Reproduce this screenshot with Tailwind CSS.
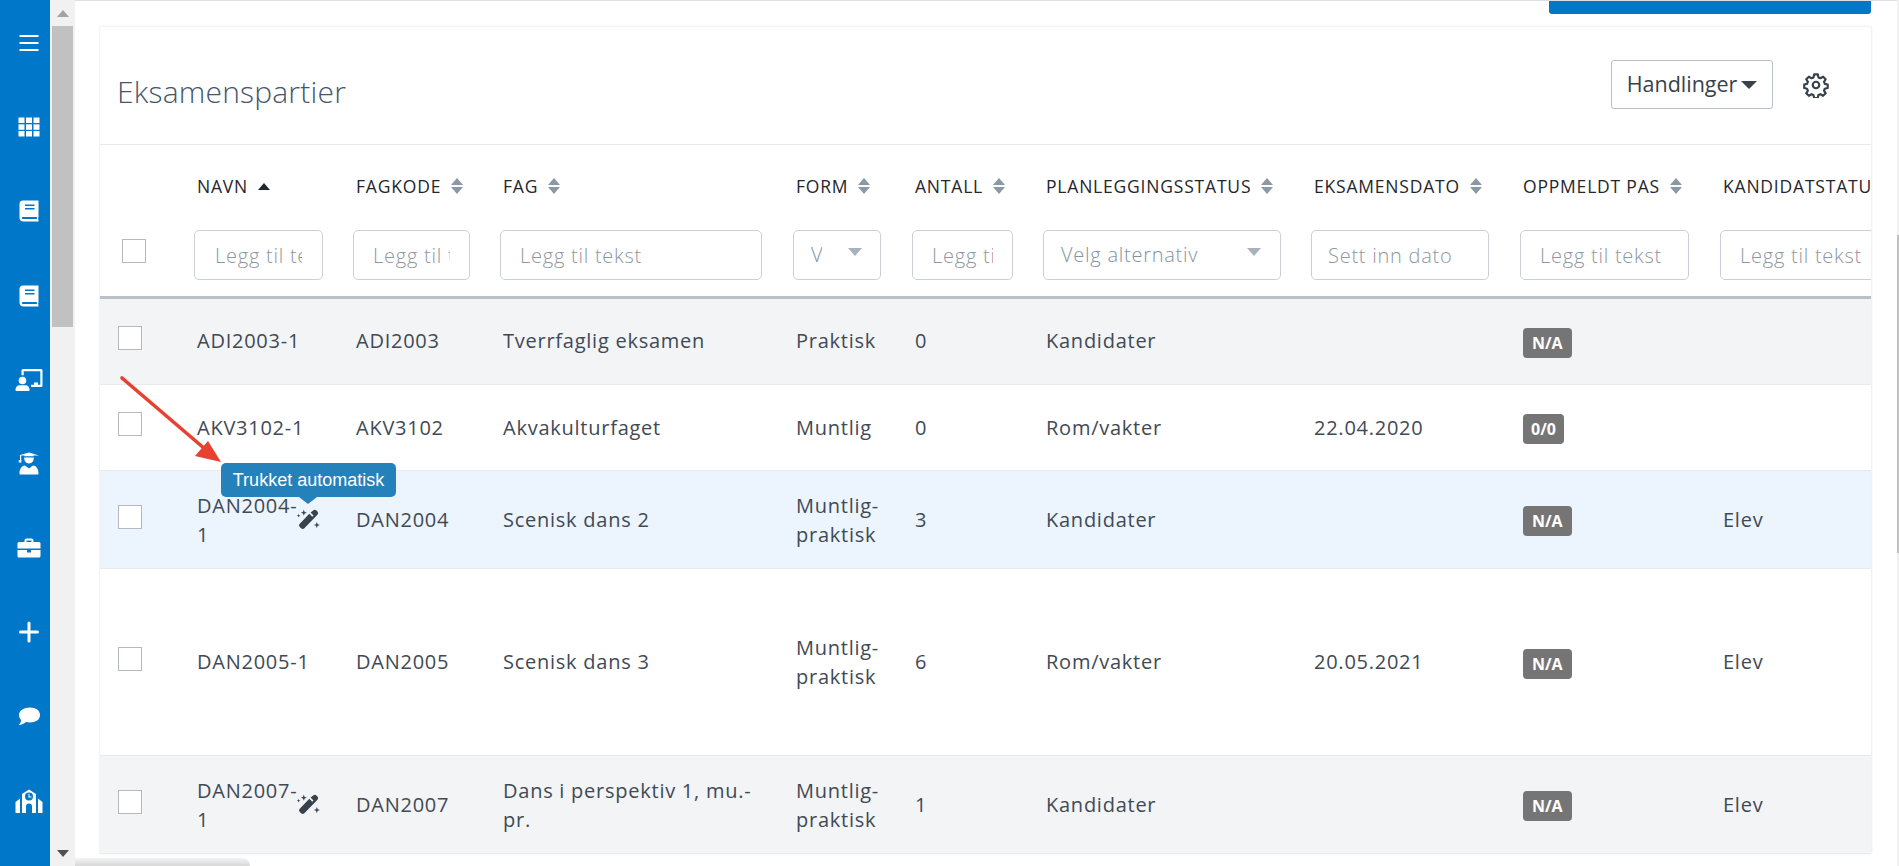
<!DOCTYPE html>
<html lang="en">
<head>
    <meta charset="UTF-8">
    <title>Eksamenspartier</title>
    <script src="https://cdn.jsdelivr.net/npm/@tailwindcss/browser@4"></script>
</head>
<body class="h-screen overflow-hidden bg-white font-['Open_Sans',sans-serif] text-[#3f4a55]">
<div class="relative flex h-[866px] w-[1899px] overflow-hidden">

    <!-- Sidebar -->
    <nav class="flex w-[50px] shrink-0 flex-col bg-[#0077c8] pt-px pl-2 text-white">
        <div class="flex h-[84.2px] items-center justify-center">
            <svg class="h-6 w-7" viewBox="0 0 28 24" fill="currentColor"><rect x="4.5" y="4" width="19" height="2"/><rect x="4.5" y="11" width="19" height="2"/><rect x="4.5" y="18" width="19" height="2"/></svg>
        </div>
        <div class="flex h-[84.2px] items-center justify-center">
            <svg class="h-6 w-7" viewBox="0 0 28 24" fill="currentColor"><rect x="3.5" y="2.5" width="6" height="5.5"/><rect x="11" y="2.5" width="6" height="5.5"/><rect x="18.5" y="2.5" width="6" height="5.5"/><rect x="3.5" y="9.3" width="6" height="5.5"/><rect x="11" y="9.3" width="6" height="5.5"/><rect x="18.5" y="9.3" width="6" height="5.5"/><rect x="3.5" y="16" width="6" height="5.5"/><rect x="11" y="16" width="6" height="5.5"/><rect x="18.5" y="16" width="6" height="5.5"/></svg>
        </div>
        <div class="flex h-[84.2px] items-center justify-center">
            <svg class="h-6 w-7" viewBox="0 0 28 24"><path fill="#fff" d="M8 1.5h15.5v16.8c-.5.6-.5 1.9 0 2.7v1.5H8.5A4 4 0 0 1 4.5 18.5V5A3.5 3.5 0 0 1 8 1.5z"/><path fill="#0077c8" d="M10 5.5h9.5V7H10zM10 9h9.5v1.5H10zM7.5 18H22c-.2.6-.2 1.2 0 2H7.5c-.8-.5-.8-1.5 0-2z"/></svg>
        </div>
        <div class="flex h-[84.2px] items-center justify-center">
            <svg class="h-6 w-7" viewBox="0 0 28 24"><path fill="#fff" d="M8 1.5h15.5v16.8c-.5.6-.5 1.9 0 2.7v1.5H8.5A4 4 0 0 1 4.5 18.5V5A3.5 3.5 0 0 1 8 1.5z"/><path fill="#0077c8" d="M10 5.5h9.5V7H10zM10 9h9.5v1.5H10zM7.5 18H22c-.2.6-.2 1.2 0 2H7.5c-.8-.5-.8-1.5 0-2z"/></svg>
        </div>
        <div class="flex h-[84.2px] items-center justify-center">
            <svg class="h-6 w-7" viewBox="0 0 28 24" fill="#fff"><circle cx="7.5" cy="12.5" r="3.8"/><path d="M.5 22c0-3.5 2.5-4.8 4-4.8h6c1.5 0 4 1.3 4 4.8 0 .6-.4 1-1 1h-12c-.6 0-1-.4-1-1z"/><path d="M6.5 2.5A1.5 1.5 0 0 1 8 1h18a1.5 1.5 0 0 1 1.5 1.5v15A1.5 1.5 0 0 1 26 19H16v-2.2h3v-2.3h4v2.3h2.3V3.2H8.700v4H6.5z"/></svg>
        </div>
        <div class="flex h-[84.2px] items-center justify-center">
            <svg class="h-6 w-7" viewBox="0 0 28 24" fill="#fff"><path d="M14 .5 24 3.5h-5.5v.7h-9v-.7H6.2V8H5V3.2H4z"/><path d="M9.2 5.5h9.6c.3 3-1.800 6-4.800 6s-5.100-3-4.800-6z"/><rect x="3.8" y="8" width="2.6" height="2.5"/><path d="M4.5 21.5c0-5 2.500-8 5.500-8l4 3 4-3c3 0 5.500 3 5.500 8 0 .6-.4 1-1 1h-17c-.6 0-1-.4-1-1z"/></svg>
        </div>
        <div class="flex h-[84.2px] items-center justify-center">
            <svg class="h-6 w-7" viewBox="0 0 28 24" fill="#fff"><path d="M9.5 6V4.5a2 2 0 0 1 2-2h5a2 2 0 0 1 2 2V6H24a1.5 1.5 0 0 1 1.5 1.5v5h-23v-5A1.5 1.5 0 0 1 4 6zM11.5 4.5V6h5V4.500z"/><path d="M2.5 14H12v2.5h4V14h9.5v6a1.5 1.5 0 0 1-1.5 1.5H4A1.5 1.5 0 0 1 2.5 20z"/></svg>
        </div>
        <div class="flex h-[84.2px] items-center justify-center">
            <svg class="h-6 w-7" viewBox="0 0 28 24" fill="#fff"><path d="M12.5 3a1.5 1.5 0 0 1 3 0v7.5h7a1.5 1.5 0 0 1 0 3h-7V21a1.5 1.5 0 0 1-3 0v-7.5h-7a1.5 1.5 0 0 1 0-3h7z"/></svg>
        </div>
        <div class="flex h-[84.2px] items-center justify-center">
            <svg class="h-6 w-7" viewBox="0 0 28 24" fill="#fff"><path d="M15 2.5c5.800 0 10 2.900 10 7.500s-4.200 7.500-10 7.500c-1.400 0-2.700-.2-3.900-.5-1.700 1.500-4.100 3-7.600 3 1.600-1.300 2.500-3 2.700-5-1.300-1.300-2.200-3-2.200-5 0-4.600 5.200-7.500 11-7.500z"/></svg>
        </div>
        <div class="flex h-[84.2px] items-center justify-center">
            <svg class="h-6 w-7" viewBox="0 0 28 24" fill="#fff"><path fill-rule="evenodd" d="M14 .5 21 5v19h-4v-6.500a3 3 0 0 0-6 0V24H7V5zM14 3.500a4 4 0 1 0 0 8 4 4 0 0 0 0-8z"/><path d="M13.500 4.700v3.800h3v-1h-2V4.700z"/><path d="M.5 13 5 9.500V24H.5zM27.500 13 23 9.500V24h4.500z"/></svg>
        </div>
    </nav>

    <!-- Inner scrollbar -->
    <div class="relative w-[25px] shrink-0 bg-[#f1f1f1]">
        <div class="absolute top-[10px] left-[7px] h-0 w-0 border-x-[6px] border-b-[7px] border-x-transparent border-b-[#a3a3a3]"></div>
        <div class="absolute top-[26px] left-[2px] h-[301px] w-[21px] bg-[#c1c1c1]"></div>
        <div class="absolute top-[850px] left-[7px] h-0 w-0 border-x-[6px] border-t-[7px] border-x-transparent border-t-[#505050]"></div>
    </div>

    <!-- Main -->
    <main class="relative min-w-0 flex-1 border-t border-[#dcdfe3] pr-[26px] pl-[24px]">
        <div class="ml-auto h-[13px] w-[322px] rounded-b-[3px] bg-[#0077c8]"></div>
        <section class="mt-3 overflow-hidden rounded-t-[3px] border-t border-l border-[#f3f4f5] bg-white shadow-[1px_0_2px_rgba(0,0,0,0.08)]">
            <header class="flex h-[118px] items-center border-b border-[#e7e9eb] pr-[42px] pb-[2px] pl-[17px]">
                <h1 class="flex-1 pt-[14px] text-[30px] font-light tracking-[0.2px] text-[#46566a]">Eksamenspartier</h1>
                <button class="flex h-[49px] w-[162px] items-center justify-center gap-[4px] rounded-[3px] border border-[#b9c0c6] text-[21.5px] font-medium text-[#37424d]">
                    Handlinger
                    <span class="mt-px h-0 w-0 border-x-[8px] border-t-[8px] border-x-transparent border-t-[#37424d]"></span>
                </button>
                <svg class="ml-[30px] h-[26px] w-[26px]" viewBox="0 0 24 24" fill="none" stroke="#37424d" stroke-width="2" stroke-linejoin="round"><circle cx="12" cy="12" r="3"/><path d="M10.3 2.2h3.4l.6 2.800 1.800.8 2.500-1.500 2.300 2.400-1.500 2.400.8 1.900 2.600.6v3.100l-2.700.7-.7 1.800 1.500 2.500-2.400 2.300-2.400-1.500-1.900.8-.6 2.700h-3.300l-.7-2.700-1.800-.8-2.400 1.500-2.400-2.300 1.500-2.500-.8-1.800-2.600-.7v-3.100l2.600-.6.8-1.900-1.500-2.400 2.400-2.400 2.400 1.500 1.900-.8z"/></svg>
            </header>

            <table class="w-[1820px] table-fixed text-[20px] tracking-[0.75px]">
                <colgroup>
                    <col class="w-[94px]"><col class="w-[159px]"><col class="w-[147px]"><col class="w-[293px]"><col class="w-[119px]"><col class="w-[131px]"><col class="w-[268px]"><col class="w-[209px]"><col class="w-[200px]"><col class="w-[200px]">
                </colgroup>
                <thead class="border-b-[3px] border-[#b9c0c8] text-left">
                    <tr class="h-[85px] text-[17.5px] font-medium tracking-[0.8px] text-[#1f262d] uppercase [&_th]:pb-[3px] [&_th]:pl-[3px] [&_th]:align-middle [&_th]:font-medium">
                        <th></th>
                        <th>
                            <div class="flex items-center gap-[10px]">Navn <span class="h-0 w-0 border-x-[6px] border-b-[7px] border-x-transparent border-b-[#1f262d]"></span></div>
                        </th>
                        <th>
                            <div class="flex items-center gap-[10px]">Fagkode <span class="flex flex-col gap-[2px]"><span class="h-0 w-0 border-x-[6px] border-b-[7px] border-x-transparent border-b-[#8b99a6]"></span><span class="h-0 w-0 border-x-[6px] border-t-[7px] border-x-transparent border-t-[#8b99a6]"></span></span></div>
                        </th>
                        <th>
                            <div class="flex items-center gap-[10px]">Fag <span class="flex flex-col gap-[2px]"><span class="h-0 w-0 border-x-[6px] border-b-[7px] border-x-transparent border-b-[#8b99a6]"></span><span class="h-0 w-0 border-x-[6px] border-t-[7px] border-x-transparent border-t-[#8b99a6]"></span></span></div>
                        </th>
                        <th>
                            <div class="flex items-center gap-[10px]">Form <span class="flex flex-col gap-[2px]"><span class="h-0 w-0 border-x-[6px] border-b-[7px] border-x-transparent border-b-[#8b99a6]"></span><span class="h-0 w-0 border-x-[6px] border-t-[7px] border-x-transparent border-t-[#8b99a6]"></span></span></div>
                        </th>
                        <th>
                            <div class="flex items-center gap-[10px]">Antall <span class="flex flex-col gap-[2px]"><span class="h-0 w-0 border-x-[6px] border-b-[7px] border-x-transparent border-b-[#8b99a6]"></span><span class="h-0 w-0 border-x-[6px] border-t-[7px] border-x-transparent border-t-[#8b99a6]"></span></span></div>
                        </th>
                        <th>
                            <div class="flex items-center gap-[10px]">Planleggingsstatus <span class="flex flex-col gap-[2px]"><span class="h-0 w-0 border-x-[6px] border-b-[7px] border-x-transparent border-b-[#8b99a6]"></span><span class="h-0 w-0 border-x-[6px] border-t-[7px] border-x-transparent border-t-[#8b99a6]"></span></span></div>
                        </th>
                        <th>
                            <div class="flex items-center gap-[10px]">Eksamensdato <span class="flex flex-col gap-[2px]"><span class="h-0 w-0 border-x-[6px] border-b-[7px] border-x-transparent border-b-[#8b99a6]"></span><span class="h-0 w-0 border-x-[6px] border-t-[7px] border-x-transparent border-t-[#8b99a6]"></span></span></div>
                        </th>
                        <th>
                            <div class="flex items-center gap-[10px]">Oppmeldt pas <span class="flex flex-col gap-[2px]"><span class="h-0 w-0 border-x-[6px] border-b-[7px] border-x-transparent border-b-[#8b99a6]"></span><span class="h-0 w-0 border-x-[6px] border-t-[7px] border-x-transparent border-t-[#8b99a6]"></span></span></div>
                        </th>
                        <th class="whitespace-nowrap">Kandidatstatus</th>
                    </tr>
                    <tr class="h-[66px] font-light [&_td]:pb-[16px] [&_td]:align-middle">
                        <td><div class="mb-[8px] ml-[22px] h-[24px] w-[24px] border border-[#b5b9bd] bg-white"></div></td>
                        <td><input class="h-[50px] w-[129px] rounded-[5px] border border-[#ccd0d4] px-[20px] outline-none placeholder:text-[#8f979e]" placeholder="Legg til tekst"></td>
                        <td><input class="h-[50px] w-[117px] rounded-[5px] border border-[#ccd0d4] px-[19px] outline-none placeholder:text-[#8f979e]" placeholder="Legg til tekst"></td>
                        <td><input class="h-[50px] w-[262px] rounded-[5px] border border-[#ccd0d4] px-[19px] outline-none placeholder:text-[#8f979e]" placeholder="Legg til tekst"></td>
                        <td>
                            <div class="flex h-[50px] w-[88px] items-center rounded-[5px] border border-[#ccd0d4] pl-[17px] text-[#83939f]">
                                <span class="w-[11px] overflow-hidden">Velg</span>
                                <span class="mb-[6px] ml-[26px] h-0 w-0 border-x-[7px] border-t-[8px] border-x-transparent border-t-[#a7b2bc]"></span>
                            </div>
                        </td>
                        <td><input class="h-[50px] w-[101px] rounded-[5px] border border-[#ccd0d4] px-[19px] outline-none placeholder:text-[#8f979e]" placeholder="Legg til tekst"></td>
                        <td>
                            <div class="flex h-[50px] w-[238px] items-center justify-between rounded-[5px] border border-[#ccd0d4] pr-[19px] pl-[17px] text-[#83939f]">
                                Velg alternativ
                                <span class="mb-[6px] h-0 w-0 border-x-[7px] border-t-[8px] border-x-transparent border-t-[#a7b2bc]"></span>
                            </div>
                        </td>
                        <td><input class="h-[50px] w-[178px] rounded-[5px] border border-[#ccd0d4] px-[16px] outline-none placeholder:text-[#8f979e]" placeholder="Sett inn dato"></td>
                        <td><input class="h-[50px] w-[169px] rounded-[5px] border border-[#ccd0d4] px-[19px] outline-none placeholder:text-[#8f979e]" placeholder="Legg til tekst"></td>
                        <td><input class="h-[50px] w-[169px] rounded-[5px] border border-[#ccd0d4] px-[19px] outline-none placeholder:text-[#8f979e]" placeholder="Legg til tekst"></td>
                    </tr>
                </thead>
                <tbody class="[&_td]:pl-[3px] [&_td]:align-middle [&_tr]:border-b [&_tr]:border-[#e8eaed]">
                    <tr class="h-[87px] bg-[#f3f4f6]">
                        <td><div class="mb-[8px] ml-[15px] h-[24px] w-[24px] border border-[#b5b9bd] bg-white"></div></td>
                        <td class="pb-px">ADI2003-1</td>
                        <td class="pb-px">ADI2003</td>
                        <td class="pb-px">Tverrfaglig eksamen</td>
                        <td class="pb-px">Praktisk</td>
                        <td class="pb-px">0</td>
                        <td class="pb-px">Kandidater</td>
                        <td></td>
                        <td><span class="mt-[3px] inline-flex h-[30px] items-center rounded-[4px] bg-[#757575] px-[9px] text-[16px] font-bold tracking-normal text-white">N/A</span></td>
                        <td></td>
                    </tr>
                    <tr class="h-[86px] bg-white">
                        <td><div class="mb-[8px] ml-[15px] h-[24px] w-[24px] border border-[#b5b9bd] bg-white"></div></td>
                        <td>AKV3102-1</td>
                        <td>AKV3102</td>
                        <td>Akvakulturfaget</td>
                        <td>Muntlig</td>
                        <td>0</td>
                        <td>Rom/vakter</td>
                        <td>22.04.2020</td>
                        <td><span class="mt-[3px] inline-flex h-[30px] items-center rounded-[4px] bg-[#757575] px-[8px] text-[16px] font-bold tracking-normal text-white">0/0</span></td>
                        <td></td>
                    </tr>
                    <tr class="h-[98px] bg-[#ecf4fd]">
                        <td><div class="mb-[6px] ml-[15px] h-[24px] w-[24px] border border-[#b5b9bd] bg-white"></div></td>
                        <td>
                            <div class="flex items-center">
                                <span class="w-[102px] shrink-0 leading-[29px]">DAN2004-1</span>
                                <svg class="ml-[-3px] h-[25px] w-[25px] shrink-0" viewBox="0 0 24 24" fill="#37424d"><path d="M16.5 3.3a2.2 2.2 0 0 1 3.1 0l1 1a2.2 2.2 0 0 1 0 3.1l-12.6 13a2.2 2.2 0 0 1-3.1 0l-1.3-1.3a2.2 2.2 0 0 1 0-3.1l9.2-9.5 2.8 2.8 1.2-1.2-2.8-2.8z"/><path d="M7.5 2.5l.8 2.2 2.2.8-2.2.8-.8 2.2-.8-2.2-2.2-.8 2.2-.8zM2.5 6.5l.5 1.3 1.3.5-1.3.5-.5 1.3-.5-1.3-1.3-.5 1.3-.5zM20 14.5l.8 2 2.2.8-2.2.8-.8 2.2-.8-2.2-2.2-.8 2.2-.8z"/></svg>
                            </div>
                        </td>
                        <td>DAN2004</td>
                        <td>Scenisk dans 2</td>
                        <td class="leading-[29px]">Muntlig-praktisk</td>
                        <td>3</td>
                        <td>Kandidater</td>
                        <td></td>
                        <td><span class="mt-[3px] inline-flex h-[30px] items-center rounded-[4px] bg-[#757575] px-[9px] text-[16px] font-bold tracking-normal text-white">N/A</span></td>
                        <td>Elev</td>
                    </tr>
                    <tr class="h-[187px] bg-white">
                        <td><div class="mb-[6px] ml-[15px] h-[24px] w-[24px] border border-[#b5b9bd] bg-white"></div></td>
                        <td>DAN2005-1</td>
                        <td>DAN2005</td>
                        <td>Scenisk dans 3</td>
                        <td class="leading-[29px]">Muntlig-praktisk</td>
                        <td>6</td>
                        <td>Rom/vakter</td>
                        <td>20.05.2021</td>
                        <td><span class="mt-[3px] inline-flex h-[30px] items-center rounded-[4px] bg-[#757575] px-[9px] text-[16px] font-bold tracking-normal text-white">N/A</span></td>
                        <td>Elev</td>
                    </tr>
                    <tr class="h-[98px] bg-[#f3f4f6]">
                        <td><div class="mb-[6px] ml-[15px] h-[24px] w-[24px] border border-[#b5b9bd] bg-white"></div></td>
                        <td>
                            <div class="flex items-center">
                                <span class="w-[102px] shrink-0 leading-[29px]">DAN2007-1</span>
                                <svg class="ml-[-3px] h-[25px] w-[25px] shrink-0" viewBox="0 0 24 24" fill="#37424d"><path d="M16.5 3.3a2.2 2.2 0 0 1 3.1 0l1 1a2.2 2.2 0 0 1 0 3.1l-12.6 13a2.2 2.2 0 0 1-3.1 0l-1.3-1.3a2.2 2.2 0 0 1 0-3.1l9.2-9.5 2.8 2.8 1.2-1.2-2.8-2.8z"/><path d="M7.5 2.5l.8 2.2 2.2.8-2.2.8-.8 2.2-.8-2.2-2.2-.8 2.2-.8zM2.5 6.5l.5 1.3 1.3.5-1.3.5-.5 1.3-.5-1.3-1.3-.5 1.3-.5zM20 14.5l.8 2 2.2.8-2.2.8-.8 2.2-.8-2.2-2.2-.8 2.2-.8z"/></svg>
                            </div>
                        </td>
                        <td>DAN2007</td>
                        <td class="leading-[29px]"><div class="w-[262px]">Dans i perspektiv 1, mu.-pr.</div></td>
                        <td class="leading-[29px]">Muntlig-praktisk</td>
                        <td>1</td>
                        <td>Kandidater</td>
                        <td></td>
                        <td><span class="mt-[3px] inline-flex h-[30px] items-center rounded-[4px] bg-[#757575] px-[9px] text-[16px] font-bold tracking-normal text-white">N/A</span></td>
                        <td>Elev</td>
                    </tr>
                </tbody>
            </table>
        </section>
    </main>

    <!-- Outer scrollbar -->
    <div class="relative w-[2px] shrink-0 bg-[#f1f1f1]">
        <div class="absolute top-[235px] h-[318px] w-[2px] bg-[#c1c1c1]"></div>
    </div>

    <!-- Horizontal scrollbar shadow -->
    <div class="absolute top-[858px] left-[75px] h-2 w-[175px] rounded-tr-[10px] bg-gradient-to-b from-[#f4f4f4] to-[#d8d8d8]"></div>

    <!-- Annotation arrow -->
    <svg class="absolute top-[370px] left-[115px] h-[100px] w-[112px]" viewBox="0 0 112 100">
        <path d="M7 8 90 79" stroke="#e8412f" stroke-width="3.6" stroke-linecap="round"/>
        <path d="M106 92 80 86 93 71z" fill="#e8412f"/>
    </svg>

    <!-- Tooltip -->
    <div class="absolute top-[463px] left-[221px] flex h-[34px] w-[175px] items-center justify-center rounded-[5px] bg-[#2581ba] font-['Liberation_Sans',sans-serif] text-[18px] text-white">
        Trukket automatisk
        <span class="absolute top-[34px] left-[78px] h-0 w-0 border-x-[9px] border-t-[7px] border-x-transparent border-t-[#2581ba]"></span>
    </div>
</div>
</body>
</html>
